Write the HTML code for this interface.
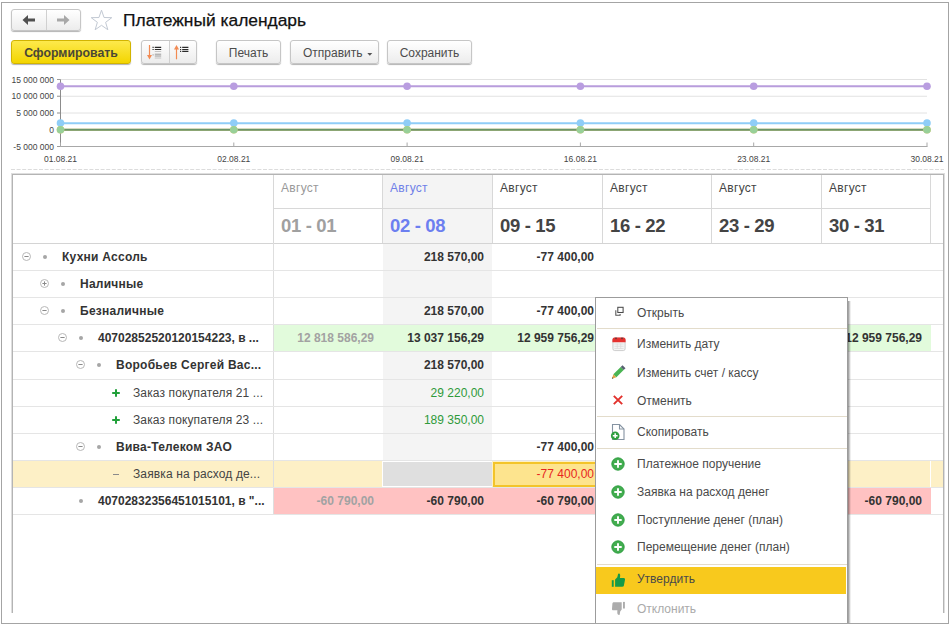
<!DOCTYPE html>
<html><head><meta charset="utf-8">
<style>
*{box-sizing:border-box;margin:0;padding:0}
html,body{width:952px;height:627px;overflow:hidden;background:#fff;font-family:"Liberation Sans",sans-serif;color:#333}
.a{position:absolute}
#frame{left:1px;top:2px;width:948px;height:622px;border:1px solid #a4a4a4;z-index:10}
.btn{position:absolute;border:1px solid #c6c6c6;border-radius:3px;background:linear-gradient(#ffffff,#ececec);box-shadow:0 1px 1px rgba(0,0,0,.3);font-size:12px;color:#4c4c4c;text-align:center;line-height:25px;white-space:nowrap}
#nav{left:11px;top:9px;width:70px;height:22px}
#title{left:123px;top:8px;font-size:17.4px;color:#111;-webkit-text-stroke:0.25px #111;line-height:25px;white-space:nowrap}
#gen{left:11px;top:40px;width:120px;height:24px;border:1px solid #d2b400;background:linear-gradient(#fde94c,#f3d500);font-weight:bold;font-size:12.3px;color:#4a4735;line-height:24px}
#sort{left:141px;top:40px;width:56px;height:24px}
#print{left:216px;top:40px;width:65px;height:24px}
#send{left:290px;top:40px;width:89px;height:24px;text-align:left;padding-left:12px}
#save{left:387px;top:40px;width:85px;height:24px}
.tbl{left:11px;top:173px;width:934px;height:440px;border:1px solid #dedede;border-bottom:none;box-shadow:inset 1px 1px 0 #b4b4b4,inset -1px 0 0 #b4b4b4}
.hl{position:absolute;height:1px;background:#e5e5e5}
.vl{position:absolute;width:1px;background:#d8d8d8}
.bg{position:absolute}
.t{position:absolute;font-size:12px;line-height:14px;white-space:nowrap}
.b{font-weight:bold}
#menu{left:595px;top:297px;width:253px;height:326px;background:#fff;border:1px solid #9c9c9c;border-bottom:none}
#msh{left:848px;top:301px;width:3px;height:322px;background:linear-gradient(90deg,rgba(0,0,0,.42),rgba(0,0,0,.12) 70%,rgba(0,0,0,0))}
.mi{position:absolute;left:41px;font-size:12px;color:#4a4a4a;line-height:14px;white-space:nowrap}
.sep{position:absolute;left:1px;width:250px;height:1px;background:#e3dccb}
</style></head><body>
<div id="frame" class="a"></div>
<div id="nav" class="btn"></div>
<div class="vl" style="left:46px;top:10px;height:20px;background:#d0d0d0"></div>
<svg class="a" style="left:22px;top:14px" width="14" height="12" viewBox="0 0 14 12"><path d="M0.5 6L6 1V4.6H13V7.4H6V11Z" fill="#505050"/></svg>
<svg class="a" style="left:56px;top:14px" width="14" height="12" viewBox="0 0 14 12"><path d="M13.5 6L8 1V4.6H1V7.4H8V11Z" fill="#a8a8a8"/></svg>
<svg class="a" style="left:0;top:0" width="130" height="40" viewBox="0 0 130 40"><path d="M101.50 10.20L104.04 17.51L111.77 17.66L105.61 22.33L107.85 29.74L101.50 25.32L95.15 29.74L97.39 22.33L91.23 17.66L98.96 17.51Z" fill="none" stroke="#c2c9d3" stroke-width="1"/></svg>
<div id="title" class="a">Платежный календарь</div>
<div id="gen" class="btn">Сформировать</div>
<div id="sort" class="btn"></div>
<div class="vl" style="left:169px;top:41px;height:22px;background:#d0d0d0"></div>
<svg class="a" style="left:145px;top:44px" width="20" height="18" viewBox="0 0 20 18"><path d="M4.5 1V13" stroke="#f28a52" stroke-width="1.2"/><path d="M2 11L4.5 15.5L7 11Z" fill="#f28a52"/><path d="M7.5 3.4H8.7M7.5 5.5H8.7" stroke="#333" stroke-width="1.1"/><path d="M9.8 3.4H16.2M9.8 5.5H16.2" stroke="#2a2a2a" stroke-width="1.1"/><path d="M9.8 7.5H16.2" stroke="#bdbdbd" stroke-width="0.9"/><path d="M7.6 10.9H8.6" stroke="#888" stroke-width="1"/><path d="M9.8 10.2H16.2M9.8 12H16.2" stroke="#9a9a9a" stroke-width="1"/><path d="M9.8 14H16.2" stroke="#bdbdbd" stroke-width="0.9"/></svg>
<svg class="a" style="left:172px;top:44px" width="20" height="18" viewBox="0 0 20 18"><path d="M4.5 4.5V15.3" stroke="#f28a52" stroke-width="1.2"/><path d="M2 5.5L4.5 1L7 5.5Z" fill="#f28a52"/><path d="M8 3.4H9.2M8 5.5H9.2M8 7.4H9.2" stroke="#333" stroke-width="1.1"/><path d="M10.2 3.4H16.4M10.2 5.5H16.4M10.2 7.4H16.4" stroke="#2a2a2a" stroke-width="1.1"/></svg>
<div id="print" class="btn">Печать</div>
<div id="send" class="btn">Отправить</div>
<svg class="a" style="left:366.5px;top:52.5px" width="6" height="4" viewBox="0 0 6 4"><path d="M0.3 0H5.3L2.8 2.8Z" fill="#555"/></svg>
<div id="save" class="btn">Сохранить</div>
<svg class="a" style="left:0;top:0" width="952" height="172" viewBox="0 0 952 172"><path d="M57 79.50H927" stroke="#e2e2e2" stroke-width="1"/><path d="M57 96.25H927" stroke="#e2e2e2" stroke-width="1"/><path d="M57 113.00H927" stroke="#e2e2e2" stroke-width="1"/><path d="M57 79.50H60.5" stroke="#9a9a9a" stroke-width="1"/><path d="M57 96.25H60.5" stroke="#9a9a9a" stroke-width="1"/><path d="M57 113.00H60.5" stroke="#9a9a9a" stroke-width="1"/><path d="M57 129.75H60.5" stroke="#9a9a9a" stroke-width="1"/><path d="M57 146.50H60.5" stroke="#9a9a9a" stroke-width="1"/><path d="M60.5 79.50V146.50" stroke="#8c8c8c" stroke-width="1"/><path d="M60.5 146.50H927.5" stroke="#a8a8a8" stroke-width="1"/><path d="M60.5 146.50V142.50" stroke="#a8a8a8" stroke-width="1"/><path d="M233.8 146.50V142.50" stroke="#a8a8a8" stroke-width="1"/><path d="M407.1 146.50V142.50" stroke="#a8a8a8" stroke-width="1"/><path d="M580.4 146.50V142.50" stroke="#a8a8a8" stroke-width="1"/><path d="M753.7 146.50V142.50" stroke="#a8a8a8" stroke-width="1"/><path d="M927.0 146.50V142.50" stroke="#a8a8a8" stroke-width="1"/><text x="54" y="82.50" text-anchor="end" font-family="Liberation Sans" font-size="8.5" fill="#444">15 000 000</text><text x="54" y="99.25" text-anchor="end" font-family="Liberation Sans" font-size="8.5" fill="#444">10 000 000</text><text x="54" y="116.00" text-anchor="end" font-family="Liberation Sans" font-size="8.5" fill="#444">5 000 000</text><text x="54" y="132.75" text-anchor="end" font-family="Liberation Sans" font-size="8.5" fill="#444">0</text><text x="54" y="149.50" text-anchor="end" font-family="Liberation Sans" font-size="8.5" fill="#444">-5 000 000</text><text x="60.5" y="162" text-anchor="middle" font-family="Liberation Sans" font-size="8.5" fill="#444">01.08.21</text><text x="233.8" y="162" text-anchor="middle" font-family="Liberation Sans" font-size="8.5" fill="#444">02.08.21</text><text x="407.1" y="162" text-anchor="middle" font-family="Liberation Sans" font-size="8.5" fill="#444">09.08.21</text><text x="580.4" y="162" text-anchor="middle" font-family="Liberation Sans" font-size="8.5" fill="#444">16.08.21</text><text x="753.7" y="162" text-anchor="middle" font-family="Liberation Sans" font-size="8.5" fill="#444">23.08.21</text><text x="927.0" y="162" text-anchor="middle" font-family="Liberation Sans" font-size="8.5" fill="#444">30.08.21</text><path d="M60.5 86.20H927.0" stroke="#b89ddc" stroke-width="2"/><path d="M60.5 123.30H927.0" stroke="#8fcdf7" stroke-width="2"/><path d="M60.5 129.75H927.0" stroke="#f0d070" stroke-width="2"/><path d="M60.5 129.75H927.0" stroke="#6a946a" stroke-width="2"/><circle cx="60.5" cy="86.20" r="3.8" fill="#b99de0"/><circle cx="233.8" cy="86.20" r="3.8" fill="#b99de0"/><circle cx="407.1" cy="86.20" r="3.8" fill="#b99de0"/><circle cx="580.4" cy="86.20" r="3.8" fill="#b99de0"/><circle cx="753.7" cy="86.20" r="3.8" fill="#b99de0"/><circle cx="927.0" cy="86.20" r="3.8" fill="#b99de0"/><circle cx="60.5" cy="123.00" r="3.8" fill="#8fcdf7"/><circle cx="233.8" cy="123.00" r="3.8" fill="#8fcdf7"/><circle cx="407.1" cy="123.00" r="3.8" fill="#8fcdf7"/><circle cx="580.4" cy="123.00" r="3.8" fill="#8fcdf7"/><circle cx="753.7" cy="123.00" r="3.8" fill="#8fcdf7"/><circle cx="927.0" cy="123.00" r="3.8" fill="#8fcdf7"/><circle cx="60.5" cy="129.75" r="3.8" fill="#f0c870"/><circle cx="233.8" cy="129.75" r="3.8" fill="#f0c870"/><circle cx="407.1" cy="129.75" r="3.8" fill="#f0c870"/><circle cx="580.4" cy="129.75" r="3.8" fill="#f0c870"/><circle cx="753.7" cy="129.75" r="3.8" fill="#f0c870"/><circle cx="927.0" cy="129.75" r="3.8" fill="#f0c870"/><circle cx="60.5" cy="129.75" r="3.8" fill="#98d098"/><circle cx="233.8" cy="129.75" r="3.8" fill="#98d098"/><circle cx="407.1" cy="129.75" r="3.8" fill="#98d098"/><circle cx="580.4" cy="129.75" r="3.8" fill="#98d098"/><circle cx="753.7" cy="129.75" r="3.8" fill="#98d098"/><circle cx="927.0" cy="129.75" r="3.8" fill="#98d098"/><path d="M11 169.5H944" stroke="#dcdcdc" stroke-width="1" stroke-dasharray="4 1.6"/></svg>
<div class="a tbl"></div>
<div class="bg" style="left:383px;top:175px;width:109px;height:339px;background:#f4f4f4"></div>
<div class="bg" style="left:273px;top:325px;width:658px;height:26px;background:#e2fbdc"></div>
<div class="bg" style="left:13px;top:461px;width:930px;height:26px;background:#fdf0c6"></div>
<div class="bg" style="left:383px;top:461px;width:109px;height:26px;background:#fff"></div>
<div class="bg" style="left:383px;top:462px;width:109px;height:24px;background:#dfdfdf"></div>
<div class="bg" style="left:493px;top:462px;width:110px;height:25px;background:#fde48e;border:2px solid #f3c42a"></div>
<div class="bg" style="left:382px;top:461px;width:1px;height:26px;background:#fff"></div>
<div class="bg" style="left:930px;top:461px;width:1px;height:26px;background:#fff"></div>
<div class="bg" style="left:273px;top:488px;width:658px;height:26px;background:#ffc2c2"></div>
<div class="hl" style="left:273px;top:208px;width:658px;background:#d8d8d8"></div>
<div class="hl" style="left:13px;top:243px;width:930px;background:#d4d4d4"></div>
<div class="vl" style="left:273px;top:175px;height:68px"></div>
<div class="vl" style="left:382px;top:175px;height:68px"></div>
<div class="vl" style="left:492px;top:175px;height:68px"></div>
<div class="vl" style="left:602px;top:175px;height:68px"></div>
<div class="vl" style="left:711px;top:175px;height:68px"></div>
<div class="vl" style="left:821px;top:175px;height:68px"></div>
<div class="vl" style="left:930px;top:175px;height:68px"></div>
<div class="vl" style="left:273px;top:243px;height:271px;background:#dedede"></div>
<div class="hl" style="left:13px;top:270px;width:930px"></div>
<div class="hl" style="left:13px;top:297px;width:930px"></div>
<div class="hl" style="left:13px;top:324px;width:930px"></div>
<div class="hl" style="left:13px;top:351px;width:930px"></div>
<div class="hl" style="left:13px;top:379px;width:930px"></div>
<div class="hl" style="left:13px;top:406px;width:930px"></div>
<div class="hl" style="left:13px;top:433px;width:930px"></div>
<div class="hl" style="left:13px;top:460px;width:930px"></div>
<div class="hl" style="left:13px;top:487px;width:930px"></div>
<div class="hl" style="left:13px;top:514px;width:930px"></div>
<div class="t" style="left:281px;top:181px;letter-spacing:0.3px;color:#999">Август</div>
<div class="t b" style="left:281px;top:215px;font-size:18.5px;letter-spacing:-0.35px;line-height:22px;color:#a0a0a0">01 - 01</div>
<div class="t" style="left:390px;top:181px;letter-spacing:0.3px;color:#6f80e8">Август</div>
<div class="t b" style="left:390px;top:215px;font-size:18.5px;letter-spacing:-0.35px;line-height:22px;color:#6c7ff0">02 - 08</div>
<div class="t" style="left:500px;top:181px;letter-spacing:0.3px;color:#444">Август</div>
<div class="t b" style="left:500px;top:215px;font-size:18.5px;letter-spacing:-0.35px;line-height:22px;color:#444">09 - 15</div>
<div class="t" style="left:610px;top:181px;letter-spacing:0.3px;color:#444">Август</div>
<div class="t b" style="left:610px;top:215px;font-size:18.5px;letter-spacing:-0.35px;line-height:22px;color:#444">16 - 22</div>
<div class="t" style="left:719px;top:181px;letter-spacing:0.3px;color:#444">Август</div>
<div class="t b" style="left:719px;top:215px;font-size:18.5px;letter-spacing:-0.35px;line-height:22px;color:#444">23 - 29</div>
<div class="t" style="left:829px;top:181px;letter-spacing:0.3px;color:#444">Август</div>
<div class="t b" style="left:829px;top:215px;font-size:18.5px;letter-spacing:-0.35px;line-height:22px;color:#444">30 - 31</div>
<svg class="a" style="left:22px;top:252px" width="10" height="10" viewBox="0 0 10 10"><circle cx="4.5" cy="4.5" r="4" fill="none" stroke="#b8b8b8" stroke-width="1"/><path d="M2.4 4.5H6.6" stroke="#8a8a8a" stroke-width="1"/></svg>
<div class="a" style="left:43px;top:255px;width:4px;height:4px;border-radius:2px;background:#a6a6a6"></div>
<div class="t b" style="left:62px;top:250px;letter-spacing:0.25px;color:#333">Кухни Ассоль</div>
<div class="t b" style="right:468px;top:250px;color:#333">218 570,00</div>
<div class="t b" style="right:358px;top:250px;color:#333">-77 400,00</div>
<svg class="a" style="left:40px;top:279px" width="10" height="10" viewBox="0 0 10 10"><circle cx="4.5" cy="4.5" r="4" fill="none" stroke="#b8b8b8" stroke-width="1"/><path d="M2.4 4.5H6.6" stroke="#8a8a8a" stroke-width="1"/><path d="M4.5 2.4V6.6" stroke="#8a8a8a" stroke-width="1"/></svg>
<div class="a" style="left:61px;top:282px;width:4px;height:4px;border-radius:2px;background:#a6a6a6"></div>
<div class="t b" style="left:80px;top:277px;letter-spacing:0.25px;color:#333">Наличные</div>
<svg class="a" style="left:40px;top:306px" width="10" height="10" viewBox="0 0 10 10"><circle cx="4.5" cy="4.5" r="4" fill="none" stroke="#b8b8b8" stroke-width="1"/><path d="M2.4 4.5H6.6" stroke="#8a8a8a" stroke-width="1"/></svg>
<div class="a" style="left:61px;top:309px;width:4px;height:4px;border-radius:2px;background:#a6a6a6"></div>
<div class="t b" style="left:80px;top:304px;letter-spacing:0.25px;color:#333">Безналичные</div>
<div class="t b" style="right:468px;top:304px;color:#333">218 570,00</div>
<div class="t b" style="right:358px;top:304px;color:#333">-77 400,00</div>
<svg class="a" style="left:58px;top:333px" width="10" height="10" viewBox="0 0 10 10"><circle cx="4.5" cy="4.5" r="4" fill="none" stroke="#b8b8b8" stroke-width="1"/><path d="M2.4 4.5H6.6" stroke="#8a8a8a" stroke-width="1"/></svg>
<div class="a" style="left:79px;top:336px;width:4px;height:4px;border-radius:2px;background:#a6a6a6"></div>
<div class="t b" style="left:98px;top:331px;color:#333">40702852520120154223, в ...</div>
<div class="t b" style="right:578px;top:331px;color:#a2a2a2">12 818 586,29</div>
<div class="t b" style="right:468px;top:331px;color:#333">13 037 156,29</div>
<div class="t b" style="right:358px;top:331px;color:#333">12 959 756,29</div>
<div class="t b" style="right:249px;top:331px;color:#333">12 959 756,29</div>
<div class="t b" style="right:139px;top:331px;color:#333">12 959 756,29</div>
<div class="t b" style="right:30px;top:331px;color:#333">12 959 756,29</div>
<svg class="a" style="left:76px;top:360px" width="10" height="10" viewBox="0 0 10 10"><circle cx="4.5" cy="4.5" r="4" fill="none" stroke="#b8b8b8" stroke-width="1"/><path d="M2.4 4.5H6.6" stroke="#8a8a8a" stroke-width="1"/></svg>
<div class="a" style="left:97px;top:363px;width:4px;height:4px;border-radius:2px;background:#a6a6a6"></div>
<div class="t b" style="left:116px;top:358px;letter-spacing:0.25px;color:#333">Воробьев Сергей Вас...</div>
<div class="t b" style="right:468px;top:358px;color:#333">218 570,00</div>
<svg class="a" style="left:111px;top:388px" width="10" height="10" viewBox="0 0 10 10"><path d="M5 1.2V8.8M1.2 5H8.8" stroke="#21a03a" stroke-width="2"/></svg>
<div class="t" style="left:133px;top:386px;letter-spacing:0.12px;color:#444">Заказ покупателя 21 ...</div>
<div class="t" style="right:468px;top:386px;color:#2f9a3a">29 220,00</div>
<svg class="a" style="left:111px;top:415px" width="10" height="10" viewBox="0 0 10 10"><path d="M5 1.2V8.8M1.2 5H8.8" stroke="#21a03a" stroke-width="2"/></svg>
<div class="t" style="left:133px;top:413px;letter-spacing:0.12px;color:#444">Заказ покупателя 23 ...</div>
<div class="t" style="right:468px;top:413px;color:#2f9a3a">189 350,00</div>
<svg class="a" style="left:76px;top:442px" width="10" height="10" viewBox="0 0 10 10"><circle cx="4.5" cy="4.5" r="4" fill="none" stroke="#b8b8b8" stroke-width="1"/><path d="M2.4 4.5H6.6" stroke="#8a8a8a" stroke-width="1"/></svg>
<div class="a" style="left:97px;top:445px;width:4px;height:4px;border-radius:2px;background:#a6a6a6"></div>
<div class="t b" style="left:116px;top:440px;letter-spacing:0.25px;color:#333">Вива-Телеком ЗАО</div>
<div class="t b" style="right:358px;top:440px;color:#333">-77 400,00</div>
<div class="a" style="left:113px;top:474px;width:6px;height:1px;background:#8a8a8a"></div>
<div class="t" style="left:133px;top:467px;letter-spacing:0.12px;color:#444">Заявка на расход де...</div>
<div class="t" style="right:358px;top:467px;color:#e8261e">-77 400,00</div>
<div class="a" style="left:79px;top:499px;width:4px;height:4px;border-radius:2px;background:#a6a6a6"></div>
<div class="t b" style="left:98px;top:494px;color:#333">40702832356451015101, в "...</div>
<div class="t b" style="right:578px;top:494px;color:#a2a2a2">-60 790,00</div>
<div class="t b" style="right:468px;top:494px;color:#333">-60 790,00</div>
<div class="t b" style="right:358px;top:494px;color:#333">-60 790,00</div>
<div class="t b" style="right:249px;top:494px;color:#333">-60 790,00</div>
<div class="t b" style="right:139px;top:494px;color:#333">-60 790,00</div>
<div class="t b" style="right:30px;top:494px;color:#333">-60 790,00</div>
<div id="msh" class="a"></div>
<div id="menu" class="a">
<div class="a" style="left:0px;top:269px;width:250px;height:27px;background:#f8c91d"></div>
<div class="mi" style="top:7.5px;left:41px;color:#4a4a4a">Открыть</div>
<svg class="a" style="left:15.5px;top:7.0px" width="14" height="14" viewBox="0 0 14 14"><rect x="5.8" y="2.3" width="5.3" height="5.2" fill="none" stroke="#4a4a4a" stroke-width="1.05"/><path d="M3.8 5.3V10.3H8.1V9" fill="none" stroke="#555" stroke-width="1.05"/></svg>
<div class="sep" style="top:30px"></div>
<div class="mi" style="top:39.3px;left:41px;color:#4a4a4a">Изменить дату</div>
<svg class="a" style="left:14.8px;top:37.8px" width="16" height="16" viewBox="0 0 16 16"><rect x="1.9" y="2" width="12.2" height="12.6" rx="1.8" fill="#f4f4f4" stroke="#cdcdcd" stroke-width="1"/><path d="M1.4 4C1.4 2.4 2.2 1.5 3.6 1.5H12.4C13.8 1.5 14.6 2.4 14.6 4V6.3H1.4Z" fill="#e5312f"/><circle cx="5" cy="2.3" r="0.9" fill="#5a3a3a"/><circle cx="11" cy="2.3" r="0.9" fill="#5a3a3a"/><path d="M3.4 8H12.6M3.4 10.3H12.6M3.4 12.5H12.6M6.3 7.5V12.5M9.7 7.5V12.5" stroke="#dadada" stroke-width="0.7"/></svg>
<div class="mi" style="top:67.9px;left:41px;color:#4a4a4a">Изменить счет / кассу</div>
<svg class="a" style="left:13.0px;top:65.9px" width="18" height="18" viewBox="0 0 18 18"><path d="M2.9 14.8L7.36 13.32L4.39 10.35Z" fill="#e3a243"/><path d="M2.9 14.8L4.46 14.28L3.42 13.24Z" fill="#3a3a3a"/><path d="M7.36 13.32L14.65 6.03L11.68 3.06L4.39 10.35Z" fill="#4ab553"/><path d="M14.65 6.03L16.49 4.19L13.52 1.22L11.68 3.06Z" fill="#566070"/></svg>
<div class="mi" style="top:95.6px;left:41px;color:#4a4a4a">Отменить</div>
<svg class="a" style="left:16.0px;top:95.6px" width="12" height="12" viewBox="0 0 12 12"><path d="M1.8 1.8L10.2 10.2M10.2 1.8L1.8 10.2" stroke="#e2312c" stroke-width="1.9"/></svg>
<div class="sep" style="top:118px"></div>
<div class="mi" style="top:127.1px;left:41px;color:#4a4a4a">Скопировать</div>
<svg class="a" style="left:13.5px;top:124.6px" width="16" height="18" viewBox="0 0 16 18"><path d="M2.5 1.5H9.5L14 6V16.5H2.5Z" fill="#fff" stroke="#8593a2" stroke-width="1.1"/><path d="M9.5 1.5V6H14" fill="none" stroke="#8593a2" stroke-width="1.1"/><circle cx="5.2" cy="12.7" r="4.3" fill="#2e9e3f"/><path d="M5.2 10.3V15.1M2.8 12.7H7.6" stroke="#fff" stroke-width="1.5"/></svg>
<div class="sep" style="top:150px"></div>
<div class="mi" style="top:158.5px;left:41px;color:#4a4a4a">Платежное поручение</div>
<svg class="a" style="left:15.4px;top:158.6px" width="14" height="14" viewBox="0 0 14 14"><circle cx="7" cy="7" r="6.2" fill="#43ad50" stroke="#279b3a" stroke-width="0.9"/><path d="M7 3.3V10.7M3.3 7H10.7" stroke="#fff" stroke-width="1.9"/></svg>
<div class="mi" style="top:186.8px;left:41px;color:#4a4a4a">Заявка на расход денег</div>
<svg class="a" style="left:15.4px;top:186.9px" width="14" height="14" viewBox="0 0 14 14"><circle cx="7" cy="7" r="6.2" fill="#43ad50" stroke="#279b3a" stroke-width="0.9"/><path d="M7 3.3V10.7M3.3 7H10.7" stroke="#fff" stroke-width="1.9"/></svg>
<div class="mi" style="top:214.5px;left:41px;color:#4a4a4a">Поступление денег (план)</div>
<svg class="a" style="left:15.4px;top:214.6px" width="14" height="14" viewBox="0 0 14 14"><circle cx="7" cy="7" r="6.2" fill="#43ad50" stroke="#279b3a" stroke-width="0.9"/><path d="M7 3.3V10.7M3.3 7H10.7" stroke="#fff" stroke-width="1.9"/></svg>
<div class="mi" style="top:242.3px;left:41px;color:#4a4a4a">Перемещение денег (план)</div>
<svg class="a" style="left:15.4px;top:242.4px" width="14" height="14" viewBox="0 0 14 14"><circle cx="7" cy="7" r="6.2" fill="#43ad50" stroke="#279b3a" stroke-width="0.9"/><path d="M7 3.3V10.7M3.3 7H10.7" stroke="#fff" stroke-width="1.9"/></svg>
<div class="sep" style="top:266px"></div>
<div class="mi" style="top:274.2px;left:41px;color:#4a4a4a">Утвердить</div>
<svg class="a" style="left:14.0px;top:273.7px" width="16" height="16" viewBox="0 0 16 16"><rect x="1.8" y="8.2" width="1.9" height="6.6" fill="#159a48"/><path d="M5.1 7.6L7.3 5.2L8 2.2C8.2 1.5 9 1.4 9.6 1.8C10.4 2.4 10.3 4.2 9.9 6H13.8C14.8 6 15.2 6.9 15 7.8L13.9 13.6C13.7 14.4 13.2 14.8 12.4 14.8H5.1Z" fill="#159a48"/></svg>
<div class="mi" style="top:303.5px;left:41px;color:#aaa">Отклонить</div>
<svg class="a" style="left:14.0px;top:301.5px" width="16" height="16" viewBox="0 0 16 16"><rect x="13" y="1.9" width="1.9" height="6.6" fill="#acacac"/><path d="M11.7 2.3H4C3.2 2.3 2.6 2.7 2.4 3.5L2 8.9C1.9 9.7 2.4 10.2 3.2 10.2H7.4C7.2 12 7.2 13.8 8 14.6C8.6 15.2 9.4 15.1 9.7 14.4L10.2 11.6L11.7 9.4Z" fill="#acacac"/></svg>
</div>
</body></html>
